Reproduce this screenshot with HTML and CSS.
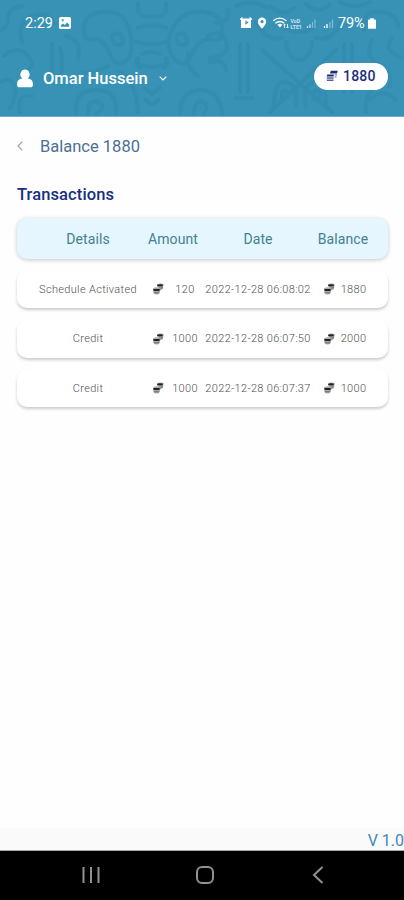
FILE: index.html
```html
<!DOCTYPE html>
<html lang="en">
<head>
  <meta charset="UTF-8" />
  <meta name="viewport" content="width=device-width, initial-scale=1" />
  <title>Balance</title>
  <link rel="stylesheet" href="styles.css">
</head>
<body>

  <svg class="symbols" width="0" height="0">
    <symbol id="coins" viewBox="0 0 12 12">
      <path d="M4.8.8h7l-.9 2.800H4z" fill="currentColor" />
      <path d="M8.800 5h2.200M8.800 7h1.700" stroke="currentColor" stroke-width="1.200" opacity=".75" />
      <path d="M1.300 4.600h6.800l-.6 2H.7z" fill="currentColor" />
      <path d="M.7 8.100h7M.9 10.200h6.600" stroke="currentColor" stroke-width="1.500" opacity=".75" />
    </symbol>
    <symbol id="stack" viewBox="0 0 12 12">
      <path d="M5 1.500q3-1.700 6.700-.2L10.800 6 8 7.500z" fill="#9a9a9a" />
      <path d="M1 5.500q3.500-2.500 7.300 0L7.800 10q-3.300 3-6.500 0z" fill="#aaa" />
      <path d="M5.300 1.700q2.700-1 5.700 0l-.7 1.600H5zM1.300 5.900h6.500L7.400 8H1.800z" fill="#222" />
      <path d="M8.800 5l1.700-.4M2 9.800h5" fill="none" stroke="#666" stroke-width=".9" />
    </symbol>
  </svg>

  <header>
    <svg class="pattern" viewBox="0 0 404 116" preserveAspectRatio="none">
      <!-- left scrolls -->
      <path d="M0 30q8-2 8-12T22 6M22 42q-6-20 10-26t22 8M4 56q14-12 24 0t-6 16M0 82q10-6 14 4t-4 22M20 112q-4-18 12-16M52 44v34M60 48q4 14 0 30M66 36q16 4 12 22" />
      <!-- mask -->
      <path d="M138 4q-2 14 14 12 16 2 14-12M138 28q14-6 28 0M136 42q16 4 32 0M142 54q9-4 18 0M138 64q14 6 28 0M138 58q-4 6 2 10M166 58q4 6-2 10" />
      <path d="M84 32q-2-18 18-20t26 14 2 30q-12 16-20-2T92 40q-8 0-8-8zM222 32q2-18-18-20t-30 14-2 30q12 16 20-2t22-14q8 0 8-8z" />
      <path d="M112 36q7-6 10 1t-3 8-7-9zM176 36q7-6 10 1t-3 8-7-9z" />
      <!-- arches -->
      <path d="M76 114q-2-24 20-24t20 24M88 114q0-16 10-12t-2 12M120 72q16 8 18 40M108 66q-14 8-26 6M180 114q0-24 20-24t22 24M194 114q0-14 8-12t2 12M188 54q-2 14 10 22M144 88l8 6 8-6M146 100q6 8 12 0" />
      <!-- columns and figure -->
      <path d="M208 36q14-8 18 6t-16 16M228 10q2 14-12 12M210 62q14-4 16 8M240 44v48M248 44v48M236 98h16M256 22q10 20 26 16M342 22q-10 20-26 16M282 24q6 8 17 8t17-8M286 42q2 18 13 18t13-18M262 50l70 62M336 50l-66 62" />
      <path d="M274 108q0-28 12-26t10 24M326 108q0-28-12-26t-8 24M282 92q4-4 6 1t-6 5zM314 92q4-4 6 1t-6 5zM352 44v48M344 44v48" />
      <!-- right scrolls -->
      <path d="M340 2q14 8 30 0M364 30q-2-20 16-18t18 14M372 40q-8 16 6 24t12 22M392 38q-10 14 12 20M396 100q-14-14-26 0M366 112q-2-16 8-24M236 6q18-8 30 2M270 6q12 12 24 2M306 4q12 12 24 0" />
    </svg>

    <div class="status">
      <span class="time">2:29</span>
      <svg class="photo" viewBox="0 0 13 13">
        <path fill-rule="evenodd" fill="#fff" d="M2 0h9a2 2 0 0 1 2 2v9a2 2 0 0 1-2 2H2a2 2 0 0 1-2-2V2a2 2 0 0 1 2-2zM2 10.500h9V8L8.500 6 6.300 8.700 4.200 7 2 9zM3 2.500v2h2v-2z" />
      </svg>
      <svg class="signals" viewBox="0 0 97 16">
        <g fill="#fff">
          <path d="M1 3.500h10V13H1z" />
          <path d="M0 4.500l2.500-2M12 4.500l-2.500-2" stroke="#fff" stroke-width="1.300" />
          <path d="M6 5.800v2.800l2.200-1.500" fill="none" stroke="#3792b5" stroke-width="1.200" />
          <path fill-rule="evenodd" d="M22 2.500a4.200 4.200 0 0 1 4.200 4.200c0 2.800-4.200 7-4.200 7s-4.200-4.200-4.200-7A4.200 4.200 0 0 1 22 2.500zm0 2.600a1.600 1.600 0 1 0 .1 0z" />
          <path d="M37.400 9.800l2.500 2.800 2.500-2.800q-2.500-2-5 0z" />
        </g>
        <path d="M33.200 5.700q6.500-5 13.200 0M35.300 8.200q4.500-3.400 9 0" fill="none" stroke="#fff" stroke-width="1.300" />
        <path d="M44.500 13V9m-1.200 1.200L44.500 9l1.200 1.200M47.500 9v4m-1.200-1.200l1.200 1.200 1.200-1.200" fill="none" stroke="#fff" stroke-width=".8" />
        <text x="50.500" y="7.500" class="tiny">VoD</text>
        <text x="50.500" y="13.500" class="tiny">LTE1</text>
        <path d="M67.500 13v-2M70 13V9.500" stroke="#fff" stroke-width="1.200" opacity=".8" />
        <path d="M72.500 13V7M75 13V4.500M90 13V7M92.500 13V4.500" stroke="#fff" stroke-width="1.200" opacity=".4" />
        <path d="M84.500 13v-2M87 13V9" stroke="#fff" stroke-width="1.300" />
      </svg>
      <span class="percent">79%</span>
      <svg class="battery" viewBox="0 0 9 12">
        <path d="M2.500 0h4v1.500H8A1 1 0 0 1 9 2.500V11a1 1 0 0 1-1 1H1a1 1 0 0 1-1-1V2.500a1 1 0 0 1 1-1h1.500z" fill="#fff" />
      </svg>
    </div>

    <div class="account">
      <svg class="user" viewBox="0 0 17 19">
        <path d="M8.500 0a4.800 5.200 0 0 1 2.900 9.400q5.600.4 5.600 6.400 0 3-2.500 3h-12q-2.500 0-2.500-3 0-6 5.600-6.400A4.800 5.200 0 0 1 8.500 0z" fill="#fff" />
      </svg>
      <span class="name">Omar Hussein</span>
      <svg class="chevron" viewBox="0 0 8 5"><path d="M.7.7L4 4 7.300.7" /></svg>
      <div class="pill">
        <svg><use href="#coins" /></svg>
        <span>1880</span>
      </div>
    </div>
  </header>

  <main>
    <div class="back">
      <svg viewBox="0 0 6 10"><path d="M5.300.8L1 5l4.300 4.200" /></svg>
      <span>Balance 1880</span>
    </div>

    <h2>Transactions</h2>

    <div class="row head">
      <span>Details</span>
      <span>Amount</span>
      <span>Date</span>
      <span>Balance</span>
    </div>
    <div class="row">
      <span>Schedule Activated</span>
      <span class="coin"><svg><use href="#stack" /></svg><b>120</b></span>
      <span class="date">2022-12-28 06:08:02</span>
      <span class="coin total"><svg><use href="#stack" /></svg><b>1880</b></span>
    </div>
    <div class="row">
      <span>Credit</span>
      <span class="coin"><svg><use href="#stack" /></svg><b>1000</b></span>
      <span class="date">2022-12-28 06:07:50</span>
      <span class="coin total"><svg><use href="#stack" /></svg><b>2000</b></span>
    </div>
    <div class="row">
      <span>Credit</span>
      <span class="coin"><svg><use href="#stack" /></svg><b>1000</b></span>
      <span class="date">2022-12-28 06:07:37</span>
      <span class="coin total"><svg><use href="#stack" /></svg><b>1000</b></span>
    </div>
  </main>

  <footer>V 1.0</footer>

  <nav>
    <svg viewBox="0 0 18 18"><path d="M1.500 1v16M9 1v16M16.500 1v16" /></svg>
    <svg viewBox="0 0 18 18"><rect x="1" y="1" width="16" height="16" rx="5" /></svg>
    <svg viewBox="0 0 18 18"><path d="M13.500 1L5 9l8.500 8" /></svg>
  </nav>

</body>
</html>
```
FILE: styles.css
```css
* {
  box-sizing: border-box;
}

body {
  font-family: Roboto, sans-serif;
  margin: 0;
  height: 900px;
  display: flex;
  flex-direction: column;
  background-color: #fefefe;
  overflow: hidden;
}

svg {
  display: block;
  flex: none;
}

.symbols {
  position: absolute;
}

header {
  position: relative;
  height: 117px;
  background-color: #3792b5;
  border-bottom: 1px solid #69aac4;
  color: white;
}

.pattern {
  position: absolute;
  inset: 0;
  width: 100%;
  height: 100%;
  fill: none;
  stroke: #277fa5;
  stroke-width: 4;
  stroke-linecap: round;
  opacity: 0.26;
}

.status {
  position: relative;
  display: flex;
  align-items: center;
  height: 46px;
  padding: 0 28px 0 25px;
  font-size: 14.5px;
}

.time {
  width: 34px;
}

.photo {
  width: 12px;
  height: 12px;
}

.signals {
  width: 97px;
  height: 16px;
  margin-left: auto;
}

.tiny {
  font-size: 5.2px;
  font-weight: bold;
  fill: white;
  opacity: 0.75;
}

.percent {
  width: 28px;
  margin: 0 2px 0 1px;
  font-size: 14.5px;
  letter-spacing: -0.1px;
}

.battery {
  width: 8px;
  height: 11px;
}

.account {
  position: relative;
  display: flex;
  align-items: center;
  height: 64px;
  padding: 0 16px 0 17px;
}

.user {
  width: 16px;
  height: 19px;
}

.name {
  margin-left: 10px;
  width: 105px;
  padding-top: 1px;
  font-size: 16.5px;
  font-weight: 500;
  white-space: nowrap;
}

.chevron {
  width: 8px;
  height: 5px;
  margin-left: 11px;
  fill: none;
  stroke: white;
  stroke-width: 1.2;
}

.pill {
  display: flex;
  align-items: center;
  width: 74px;
  height: 27px;
  margin: -4px 0 0 auto;
  padding-left: 12px;
  gap: 5px;
  border-radius: 14px;
  background-color: white;
  color: #1c2f7c;
  font-size: 14px;
  font-weight: 500;
  letter-spacing: 0.2px;
}

.pill svg {
  width: 12px;
  height: 12px;
}

main {
  flex: 1;
  padding: 19px 16px 0 17px;
}

.back {
  display: flex;
  align-items: center;
  height: 20px;
  gap: 17px;
  color: #4c6f96;
  font-size: 16.5px;
}

.back svg {
  width: 6px;
  height: 10px;
  fill: none;
  stroke: #9aabc2;
  stroke-width: 1.2;
}

h2 {
  margin: 28px 0 13px;
  font-size: 16.5px;
  line-height: 21px;
  font-weight: 500;
  letter-spacing: 0.1px;
  color: #172f80;
}

.row {
  display: grid;
  grid-template-columns: repeat(4, 85px);
  align-items: center;
  height: 38px;
  margin-bottom: 11.5px;
  padding-left: 28.5px;
  border-radius: 10px;
  background-color: #fff;
  box-shadow: 0 2px 3px rgba(0, 0, 0, 0.2);
  color: #505050;
  font-size: 11px;
  font-weight: 300;
  letter-spacing: 0.33px;
  text-align: center;
  white-space: nowrap;
}

.row > span {
  justify-self: center;
}

.row.head {
  height: 41px;
  margin-bottom: 11px;
  background-color: #e5f6fe;
  box-shadow: 0 1px 4px rgba(0, 0, 0, 0.22);
  color: #43818f;
  font-size: 14px;
  font-weight: 400;
  letter-spacing: 0.1px;
}

.coin {
  display: flex;
  align-items: center;
  gap: 8px;
  padding-left: 4px;
}

.coin svg {
  width: 12px;
  height: 12px;
}

.coin b {
  width: 26px;
  font-weight: 300;
}

.total {
  gap: 6px;
  padding-left: 3px;
}

footer {
  height: 23px;
  padding-top: 2px;
  background-color: #fafafa;
  border-bottom: 1px solid #aaa;
  color: #4385bd;
  font-size: 16px;
  line-height: 21px;
  text-align: right;
}

nav {
  display: flex;
  justify-content: space-between;
  height: 49px;
  padding: 15px 77px 0 82px;
  background-color: #000;
}

nav svg {
  width: 18px;
  height: 18px;
  fill: none;
  stroke: #929292;
  stroke-width: 2;
}
```
